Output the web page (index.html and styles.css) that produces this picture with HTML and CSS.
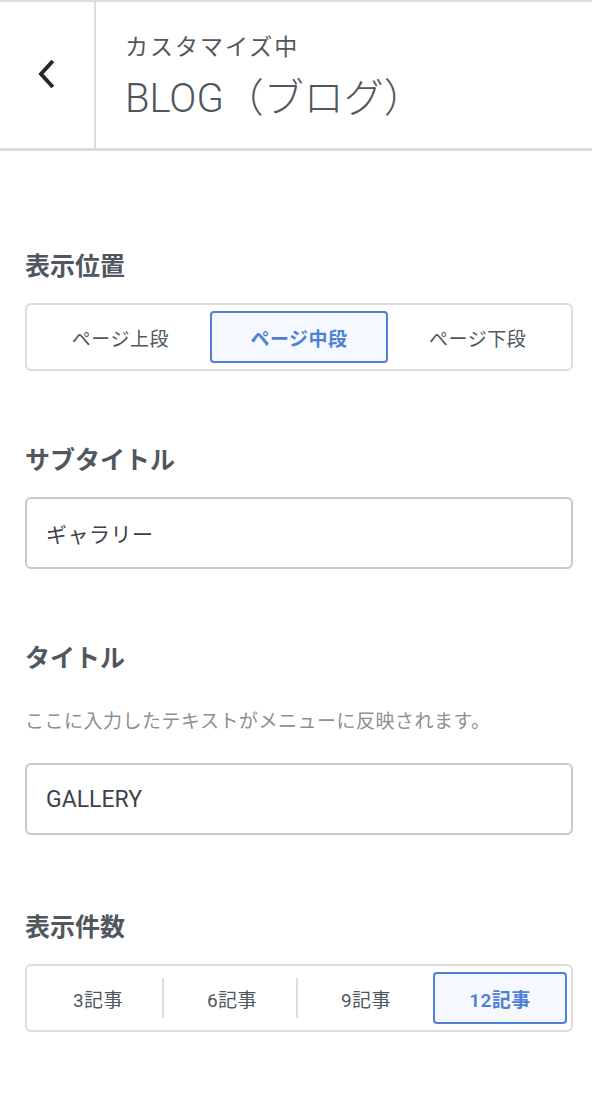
FILE: index.html
```html
<!DOCTYPE html>
<html lang="ja">
<head>
<meta charset="utf-8">
<title>カスタマイズ中 BLOG</title>
<link rel="stylesheet" href="styles.css">
</head>
<body>
<header class="head">
  <div class="back">
    <svg class="chev" width="20" height="28" viewBox="0 0 20 28"><path d="M15.5 2.5 L5 14 L15.5 25.5" fill="none" stroke="#23282d" stroke-width="3.9" stroke-linecap="square" stroke-linejoin="miter"/></svg>
  </div>
  <div class="titles">
    <div class="action">カスタマイズ中</div>
    <div class="title">BLOG（ブログ）</div>
  </div>
</header>
<main class="panel">
  <section class="control first">
    <div class="label">表示位置</div>
    <div class="seg seg3">
      <div class="opt">ページ上段</div>
      <div class="opt on">ページ中段</div>
      <div class="opt">ページ下段</div>
    </div>
  </section>
  <section class="control">
    <div class="label">サブタイトル</div>
    <div class="input">ギャラリー</div>
  </section>
  <section class="control">
    <div class="label">タイトル</div>
    <div class="desc">ここに入力したテキストがメニューに反映されます。</div>
    <div class="input latin">GALLERY</div>
  </section>
  <section class="control last">
    <div class="label">表示件数</div>
    <div class="seg seg4">
      <div class="opt div">3記事</div>
      <div class="opt div">6記事</div>
      <div class="opt">9記事</div>
      <div class="opt on">12記事</div>
    </div>
  </section>
</main>
</body>
</html>
```
FILE: styles.css
```css
* { box-sizing: border-box; }
html, body { margin: 0; padding: 0; }
body {
  background: #fff;
  font-family: Roboto, "Noto Sans CJK JP", sans-serif;
  color: #50575e;
  width: 592px;
  min-height: 1094px;
  border-top: 2px solid #dcdcde;
}
.head {
  display: flex;
  height: 149px;
  border-bottom: 3px solid #dcdcde;
}
.back {
  width: 96px;
  border-right: 2px solid #dcdcde;
  display: flex;
  align-items: center;
  justify-content: center;
  padding-bottom: 2px;
}
.chev { display: block; margin-left: -2px; }
.titles {
  padding: 31px 0 0 29px;
  display: flex;
  flex-direction: column;
}
.action {
  font-size: 23px;
  line-height: 30px;
  letter-spacing: 2px;
  color: #50575e;
}
.title {
  font-size: 40px;
  line-height: 52px;
  margin-top: 10px;
  font-weight: 300;
  color: #50575e;
}
.panel {
  padding: 0 19px 0 25px;
}
.control { margin-top: 74px; }
.control.first { margin-top: 100px; }
.control.last { margin-top: 77px; }
.label {
  font-size: 25px;
  line-height: 32px;
  font-weight: 600;
  color: #50575e;
  margin-bottom: 20px;
}
.desc {
  font-size: 19px;
  line-height: 30px;
  color: #8c8f94;
  margin-top: 32px;
  margin-bottom: 26px;
  letter-spacing: 0.5px;
}
.seg {
  display: grid;
  border: 2px solid #dcdcde;
  border-radius: 6px;
  padding: 6px 4px;
  height: 68px;
}
.seg3 { grid-template-columns: repeat(3, 1fr); }
.seg4 { grid-template-columns: repeat(4, 1fr); }
.opt {
  display: flex;
  align-items: center;
  justify-content: center;
  font-size: 19px;
  color: #50575e;
  border: 2px solid transparent;
  border-radius: 4px;
  position: relative;
  letter-spacing: 0.5px;
}
.opt.div::after {
  content: "";
  position: absolute;
  right: -1px;
  top: 4px;
  bottom: 4px;
  width: 2px;
  background: #dcdcde;
}
.opt.on {
  border-color: #4f7fd6;
  background: #f5f8fe;
  color: #4f7fd6;
  font-weight: 600;
}
.input {
  height: 72px;
  border: 2px solid #c8c9cc;
  border-radius: 6px;
  display: flex;
  align-items: center;
  padding-left: 19px;
  font-size: 21px;
  color: #3c434a;
  letter-spacing: 0.5px;
}
.input.latin { font-size: 23px; letter-spacing: 0; }
```
